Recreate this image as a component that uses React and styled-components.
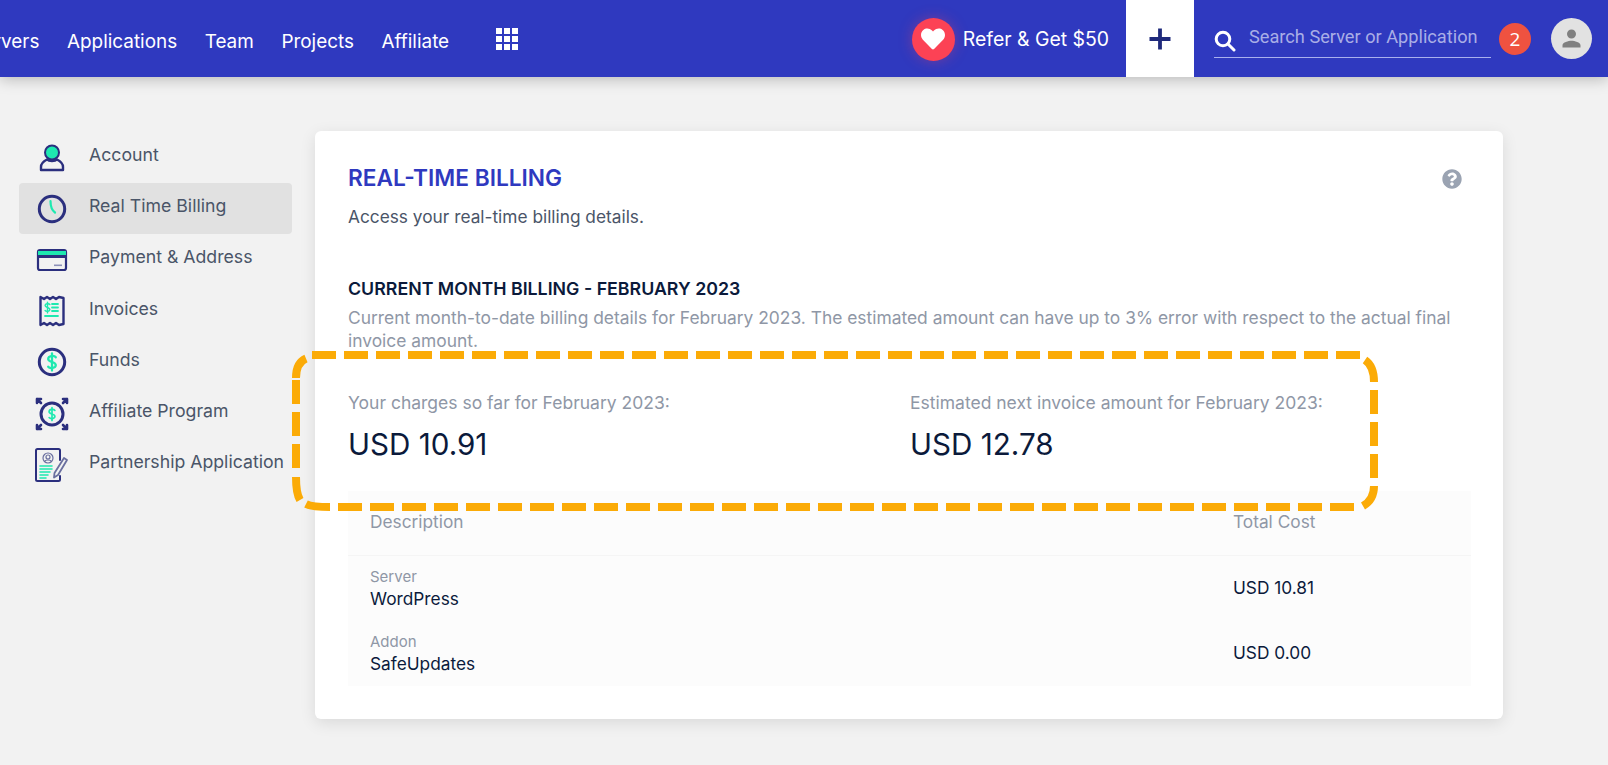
import React from "react";
import styled, { createGlobalStyle } from "styled-components";
import { FaHeart, FaQuestionCircle } from "react-icons/fa";
import { MdPerson } from "react-icons/md";

const NAVY = "#2b2f7e";
const MINT = "#1ee9b0";

const GlobalStyle = createGlobalStyle`
  html, body {
    margin: 0;
    height: 100%;
    background: #f2f2f2;
    overflow: hidden;
  }
  body {
    font-family: Inter, Lato, sans-serif;
  }
`;

const Page = styled.div`
  position: relative;
  width: 1608px;
  height: 765px;
  overflow: hidden;
`;

const Header = styled.header`
  display: flex;
  align-items: stretch;
  height: 77px;
  padding-right: 16px;
  background: #2f39bf;
  box-shadow: 0 2px 14px rgba(0, 0, 0, 0.25);
  overflow: hidden;
`;

const NavList = styled.nav`
  display: flex;
  align-items: center;
  gap: 27.6px;
  margin-left: -29.5px;
`;

const NavLink = styled.a`
  color: #fff;
  font-size: 18.9px;
  font-weight: 400;
  padding-top: 6px;
`;

const AppGrid = styled.div`
  display: grid;
  grid-template-columns: repeat(3, 6px);
  grid-auto-rows: 6px;
  gap: 2px;
  margin-left: 19px;
  span {
    background: #fff;
  }
`;

const HeaderRight = styled.div`
  display: flex;
  align-items: stretch;
  margin-left: auto;
`;

const Refer = styled.div`
  display: flex;
  align-items: center;
  gap: 8px;
  margin-right: 17px;
  color: #fff;
  font-size: 19.4px;
  font-weight: 400;
`;

const HeartBadge = styled.div`
  display: flex;
  align-items: center;
  justify-content: center;
  width: 43px;
  height: 43px;
  margin-top: 1px;
  border-radius: 50%;
  background: #fc4255;
  box-shadow: 0 0 14px rgba(252, 66, 85, 0.35);
  color: #fff;
  font-size: 24px;
`;

const AddButton = styled.div`
  display: flex;
  align-items: center;
  justify-content: center;
  width: 68px;
  background: #fff;
`;

const SearchBox = styled.div`
  display: flex;
  align-items: center;
  gap: 13px;
  align-self: flex-start;
  width: 277px;
  height: 36px;
  margin: 21px 8px 0 20px;
  border-bottom: 1px solid #a9b0ee;
  svg {
    margin-top: 4px;
    flex: none;
  }
`;

const Placeholder = styled.span`
  color: #a9aee6;
  font-family: Roboto, sans-serif;
  font-size: 18.2px;
  margin-top: -6px;
`;

const CountBadge = styled.div`
  display: flex;
  align-items: center;
  justify-content: center;
  align-self: center;
  width: 32px;
  height: 32px;
  border-radius: 50%;
  background: #ef5240;
  color: #fff;
  font-family: "Open Sans", sans-serif;
  font-size: 19px;
`;

const Avatar = styled.div`
  display: flex;
  align-items: center;
  justify-content: center;
  align-self: center;
  width: 41px;
  height: 41px;
  margin-left: 20px;
  border-radius: 50%;
  background: #e2e2e2;
  color: #808080;
  font-size: 27px;
`;

const Body = styled.div`
  display: flex;
  align-items: flex-start;
  padding: 54px 0 0 19px;
`;

const Sidebar = styled.aside`
  display: flex;
  flex-direction: column;
  width: 273px;
  margin: 1px 23px 0 0;
`;

const SideItem = styled.a`
  display: flex;
  align-items: center;
  height: 51.2px;
  padding-left: 15px;
  border-radius: 4px;
  background: ${(p) => (p.$active ? "#e1e1e1" : "transparent")};
  color: #4a5568;
  font-size: 17.7px;
  span {
    margin-bottom: 6px;
    margin-left: 19px;
    white-space: nowrap;
  }
  svg {
    flex: none;
  }
`;

const Card = styled.main`
  position: relative;
  box-sizing: border-box;
  width: 1188px;
  height: 588px;
  padding: 33px 32px 0 33px;
  border-radius: 6px;
  background: #fff;
  box-shadow: 0 4px 16px rgba(0, 0, 0, 0.1);
`;

const TitleRow = styled.div`
  display: flex;
  align-items: center;
  justify-content: space-between;
  padding-right: 9px;
  color: #9aa3b2;
  font-size: 20px;
  svg {
    margin-top: 2px;
  }
`;

const Title = styled.h1`
  margin: 0;
  color: #2f39bf;
  font-size: 22.7px;
  font-weight: 600;
  line-height: 27px;
`;

const Subtitle = styled.p`
  margin: 15px 0 0;
  color: #4a5568;
  font-size: 17.3px;
  line-height: 22px;
`;

const SectionTitle = styled.h2`
  margin: 50px 0 0;
  color: #0b1a3b;
  font-size: 17.8px;
  font-weight: 600;
  line-height: 22px;
`;

const SectionText = styled.p`
  margin: 5.5px 0 0;
  color: #8f97a6;
  font-size: 17.4px;
  line-height: 23px;
`;

const Totals = styled.div`
  display: grid;
  grid-template-columns: 562px 1fr;
  margin-top: 40.5px;
`;

const TotalLabel = styled.div`
  color: #8f97a6;
  font-size: 17.5px;
  line-height: 22px;
`;

const TotalValue = styled.div`
  margin-top: 10px;
  color: #0b1a3b;
  font-size: 29.6px;
  line-height: 40px;
`;

const Table = styled.div`
  margin-top: 26.5px;
  background: #fcfcfc;
`;

const TableRow = styled.div`
  display: grid;
  grid-template-columns: 863px 1fr;
  align-items: center;
  box-sizing: border-box;
  height: ${(p) => p.$height}px;
  padding-left: 22px;
  border-bottom: ${(p) => (p.$head ? "1px solid #f5f5f5" : "none")};
`;

const HeadCell = styled.div`
  color: #8f97a6;
  font-size: 17.3px;
  margin-bottom: 2px;
`;

const SmallLabel = styled.div`
  color: #8f97a6;
  font-size: 15px;
  line-height: 21px;
`;

const CellText = styled.div`
  color: #0b1a3b;
  font-size: 17.3px;
  line-height: 23px;
`;

const CostText = styled(CellText)`
  margin-bottom: 2px;
`;

const Callout = styled.svg`
  position: absolute;
  left: 0;
  top: 0;
  pointer-events: none;
`;

const Stroke = ({ children, w = 2, c = NAVY }) => (
  <g fill="none" stroke={c} strokeWidth={w} strokeLinecap="round" strokeLinejoin="round">
    {children}
  </g>
);

const Dollar = ({ x, y, s = 1 }) => (
  <g transform={`translate(${x} ${y}) scale(${s})`}>
    <Stroke w={2.4} c={MINT}>
      <path d="M4 -5 C2.5 -7 -4 -7 -4 -3.2 C-4 0.5 4 -0.5 4 3.2 C4 7 -2.5 7 -4 5" />
      <path d="M0 -9 V9" />
    </Stroke>
  </g>
);

const iconProps = { width: 36, height: 36, viewBox: "0 0 36 36" };

const AccountIcon = () => (
  <svg {...iconProps}>
    <circle cx="18" cy="12.5" r="7" fill={MINT} stroke={NAVY} strokeWidth="2" />
    <Stroke w={2.4}>
      <path d="M7 30 V27 C7 23 10 21 13 19.5 C15 21.5 21 21.5 23 19.5 C26 21 29 23 29 27 V30 Z" />
    </Stroke>
  </svg>
);

const ClockIcon = () => (
  <svg {...iconProps}>
    <Stroke w={3}>
      <circle cx="18" cy="18" r="12.7" />
    </Stroke>
    <Stroke w={2.2} c={MINT}>
      <path d="M16.5 10 C16.5 15 17.5 19 21 21.5" />
    </Stroke>
  </svg>
);

const CardIcon = () => (
  <svg {...iconProps}>
    <rect x="4" y="8" width="28" height="20" rx="2" fill="none" stroke={NAVY} strokeWidth="2.2" />
    <rect x="4" y="9" width="28" height="4" fill={MINT} />
    <rect x="4" y="13" width="28" height="3" fill={NAVY} />
    <rect x="20" y="22.5" width="8" height="1.6" fill="#8c90b8" />
  </svg>
);

const ReceiptIcon = () => (
  <svg {...iconProps}>
    <Stroke w={2.4}>
      <path d="M6.5 4 L10 6 L13 4 L16 6 L19 4 L22 6 L25 4 L29.5 5 V31 L25 32 L22 30 L19 32 L16 30 L13 32 L10 30 L6.5 32 Z" />
    </Stroke>
    <Dollar x={13.5} y={14.5} s={0.6} />
    <Stroke w={1.8} c={MINT}>
      <path d="M18 11 H24 M18 14.5 H24 M18 18 H24 M11 23 H24" />
    </Stroke>
  </svg>
);

const FundsIcon = () => (
  <svg {...iconProps}>
    <Stroke w={3}>
      <circle cx="18" cy="18" r="12.7" />
    </Stroke>
    <Dollar x={18} y={18} s={0.95} />
  </svg>
);

const AffiliateIcon = () => (
  <svg {...iconProps}>
    <Stroke w={3}>
      <circle cx="18" cy="18" r="11" />
    </Stroke>
    <Dollar x={18} y={18} s={0.72} />
    <Stroke w={2.6}>
      <path d="M3 3 L7 7 M3 3 H7 M3 3 V7 M33 3 L29 7 M33 3 H29 M33 3 V7 M3 33 L7 29 M3 33 H7 M3 33 V29 M33 33 L29 29 M33 33 H29 M33 33 V29" />
    </Stroke>
  </svg>
);

const PartnerIcon = () => (
  <svg {...iconProps}>
    <Stroke w={2}>
      <path d="M26 13 V3.5 C26 2.5 25.5 2 24.5 2 H3.5 C2.5 2 2 2.5 2 3.5 V32.5 C2 33.5 2.5 34 3.5 34 H24.5 C25.5 34 26 33.5 26 32.5 V29" />
    </Stroke>
    <Stroke w={1.2} c="#6a6f9f">
      <circle cx="14" cy="11" r="5" />
      <circle cx="14" cy="10" r="2" />
      <path d="M10.5 14.5 C11.5 12.5 16.5 12.5 17.5 14.5" />
    </Stroke>
    <Stroke w={1.6} c={MINT}>
      <path d="M6 19 H18 M6 22 H18 M6 25 H16 M6 28 H14 M6 31 H12" />
    </Stroke>
    <Stroke w={1.8} c="#6a6f9f">
      <path d="M30 11 L33 13 L24 28 L20 30.5 L20.5 26 Z" />
    </Stroke>
  </svg>
);

const SearchIcon = () => (
  <svg width="22" height="22" viewBox="0 0 22 22">
    <Stroke w={3} c="#fff">
      <circle cx="9" cy="9" r="6.8" />
      <path d="M14 14 L20 20" />
    </Stroke>
  </svg>
);

const sideItems = [
  { label: "Account", Icon: AccountIcon },
  { label: "Real Time Billing", Icon: ClockIcon, active: true },
  { label: "Payment & Address", Icon: CardIcon },
  { label: "Invoices", Icon: ReceiptIcon },
  { label: "Funds", Icon: FundsIcon },
  { label: "Affiliate Program", Icon: AffiliateIcon },
  { label: "Partnership Application", Icon: PartnerIcon },
];

const navItems = ["Servers", "Applications", "Team", "Projects", "Affiliate"];

const rows = [
  { kind: "Server", name: "WordPress", cost: "USD 10.81" },
  { kind: "Addon", name: "SafeUpdates", cost: "USD 0.00" },
];

export default function App() {
  return (
    <Page>
      <GlobalStyle />
      <Header>
        <NavList>
          {navItems.map((n) => (
            <NavLink key={n}>{n}</NavLink>
          ))}
          <AppGrid>
            {Array.from({ length: 9 }).map((_, i) => (
              <span key={i} />
            ))}
          </AppGrid>
        </NavList>
        <HeaderRight>
          <Refer>
            <HeartBadge>
              <FaHeart />
            </HeartBadge>
            Refer & Get $50
          </Refer>
          <AddButton>
            <svg width="24" height="24" viewBox="0 0 24 24">
              <path d="M12 1.5 V22.5 M1.5 12 H22.5" stroke="#1f2a7c" strokeWidth="3.8" />
            </svg>
          </AddButton>
          <SearchBox>
            <SearchIcon />
            <Placeholder>Search Server or Application</Placeholder>
          </SearchBox>
          <CountBadge>2</CountBadge>
          <Avatar>
            <MdPerson />
          </Avatar>
        </HeaderRight>
      </Header>
      <Body>
        <Sidebar>
          {sideItems.map(({ label, Icon, active }) => (
            <SideItem key={label} $active={active}>
              <Icon />
              <span>{label}</span>
            </SideItem>
          ))}
        </Sidebar>
        <Card>
          <TitleRow>
            <Title>REAL-TIME BILLING</Title>
            <FaQuestionCircle />
          </TitleRow>
          <Subtitle>Access your real-time billing details.</Subtitle>
          <SectionTitle>CURRENT MONTH BILLING - FEBRUARY 2023</SectionTitle>
          <SectionText>
            Current month-to-date billing details for February 2023. The estimated amount can have
            up to 3% error with respect to the actual final invoice amount.
          </SectionText>
          <Totals>
            <div>
              <TotalLabel>Your charges so far for February 2023:</TotalLabel>
              <TotalValue>USD 10.91</TotalValue>
            </div>
            <div>
              <TotalLabel>Estimated next invoice amount for February 2023:</TotalLabel>
              <TotalValue>USD 12.78</TotalValue>
            </div>
          </Totals>
          <Table>
            <TableRow $head $height={65}>
              <HeadCell>Description</HeadCell>
              <HeadCell>Total Cost</HeadCell>
            </TableRow>
            {rows.map((r) => (
              <TableRow key={r.kind} $height={65}>
                <div>
                  <SmallLabel>{r.kind}</SmallLabel>
                  <CellText>{r.name}</CellText>
                </div>
                <CostText>{r.cost}</CostText>
              </TableRow>
            ))}
          </Table>
        </Card>
      </Body>
      <Callout width="1608" height="765">
        <g fill="none" stroke="#fbab07" strokeWidth="8">
          <path d="M312 355 H1361" strokeDasharray="24 8" />
          <path d="M338 507 H1354" strokeDasharray="24 8" />
          <path d="M296 380 V468" strokeDasharray="24 8" />
          <path d="M1374 390 V478" strokeDasharray="24 8" />
          <path d="M306 358.5 C300 361 296 367 296 378" />
          <path d="M1365 360 C1371 364 1374 371 1374 382" />
          <path d="M1374 486 C1374 495 1370 502 1363 506" />
          <path d="M296 477 C296 488 297 495 300 500" />
          <path d="M306 504 C310 506 316 507 330 507" />
        </g>
      </Callout>
    </Page>
  );
}
